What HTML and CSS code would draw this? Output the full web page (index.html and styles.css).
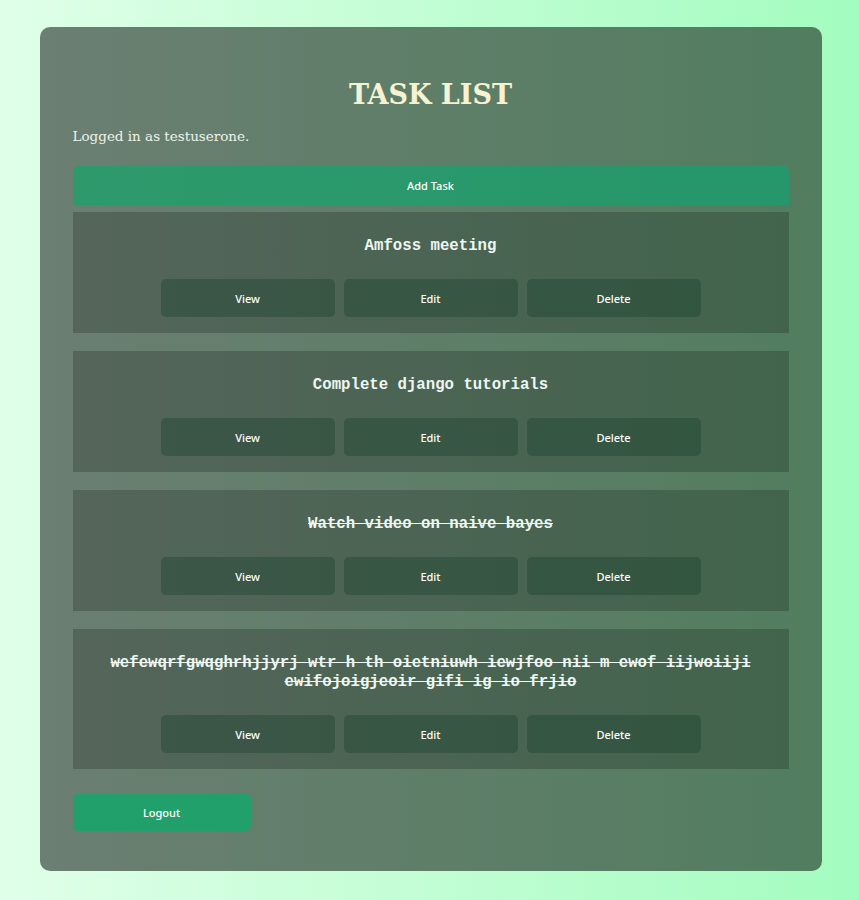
FILE: index.html
```html
<!DOCTYPE html>
<html lang="en">
<head>
    <meta charset="UTF-8">
    <meta name="viewport" content="width=device-width, initial-scale=1.0">
    <title>Task List</title>
    <link rel="stylesheet" href="styles.css">
</head>
<body>
<div id="container">
    <h1>TASK LIST</h1>
    <p class="usuario">Logged in as testuserone.</p>

    <button class="btn-add">Add Task</button>

    <!-- Lista de tareas -->
    <div class="tarea">
        <h3 class="titulo">Amfoss meeting</h3>
        <div class="acciones">
            <button class="btn">View</button>
            <button class="btn">Edit</button>
            <button class="btn">Delete</button>
        </div>
    </div>

    <div class="tarea">
        <h3 class="titulo">Complete django tutorials</h3>
        <div class="acciones">
            <button class="btn">View</button>
            <button class="btn">Edit</button>
            <button class="btn">Delete</button>
        </div>
    </div>

    <div class="tarea">
        <h3 class="titulo hecha">Watch video on naive bayes</h3>
        <div class="acciones">
            <button class="btn">View</button>
            <button class="btn">Edit</button>
            <button class="btn">Delete</button>
        </div>
    </div>

    <div class="tarea">
        <h3 class="titulo hecha">wefewqrfgwqghrhjjyrj wtr h th oietniuwh iewjfoo nii m ewof iijwoiiji ewifojoigjeoir gifi ig io frjio</h3>
        <div class="acciones">
            <button class="btn">View</button>
            <button class="btn">Edit</button>
            <button class="btn">Delete</button>
        </div>
    </div>

    <button class="btn-logout">Logout</button>
</div>
</body>
</html>
```

FILE: styles.css
```css
body {
    margin: 0;
    padding: 27px 0 29px;
    background: linear-gradient(to right, #e0ffe9, #a3fcbf);
    font-family: "DejaVu Serif", serif;
}
#container {
    width: 716px;
    margin: 0 auto;
    padding: 33px 33px 40px;
    border-radius: 10px;
    background: linear-gradient(to right, #6b7f72, #527d5f);
    transform: translateX(1px);
}
h1 {
    margin: 18px 0 0;
    font-size: 27px;
    line-height: 34px;
    text-align: center;
    color: #f7f2d2;
}
.usuario {
    margin: 14px 0 20px;
    font-size: 13.5px;
    line-height: 20px;
    color: #eef3ea;
}
button {
    font-family: "Noto Sans", sans-serif;
    font-size: 11px;
    font-weight: 500;
    color: #ffffff;
    border: none;
    cursor: pointer;
}
.btn-add {
    display: block;
    width: 100%;
    height: 39px;
    margin-bottom: 7px;
    border-radius: 5px 5px 0 0;
    background: linear-gradient(to right, #2e9a6c, #25976a);
}
.tarea {
    padding: 25px 0 16px;
    margin-bottom: 18px;
    background: rgba(0, 0, 0, 0.2);
}
.titulo {
    margin: 0 30px;
    font-family: "Liberation Mono", monospace;
    font-size: 15.7px;
    line-height: 19px;
    font-weight: bold;
    text-align: center;
    color: #eef7f2;
}
.hecha {
    text-decoration: line-through;
}
.acciones {
    display: flex;
    justify-content: center;
    gap: 9px;
    margin-top: 23px;
}
.btn {
    width: 174px;
    height: 38px;
    border-radius: 5px;
    background: rgba(20, 60, 40, 0.35);
}
.btn-logout {
    width: 178px;
    height: 37px;
    margin-top: 7px;
    border-radius: 5px;
    background: #22a06b;
}
```
